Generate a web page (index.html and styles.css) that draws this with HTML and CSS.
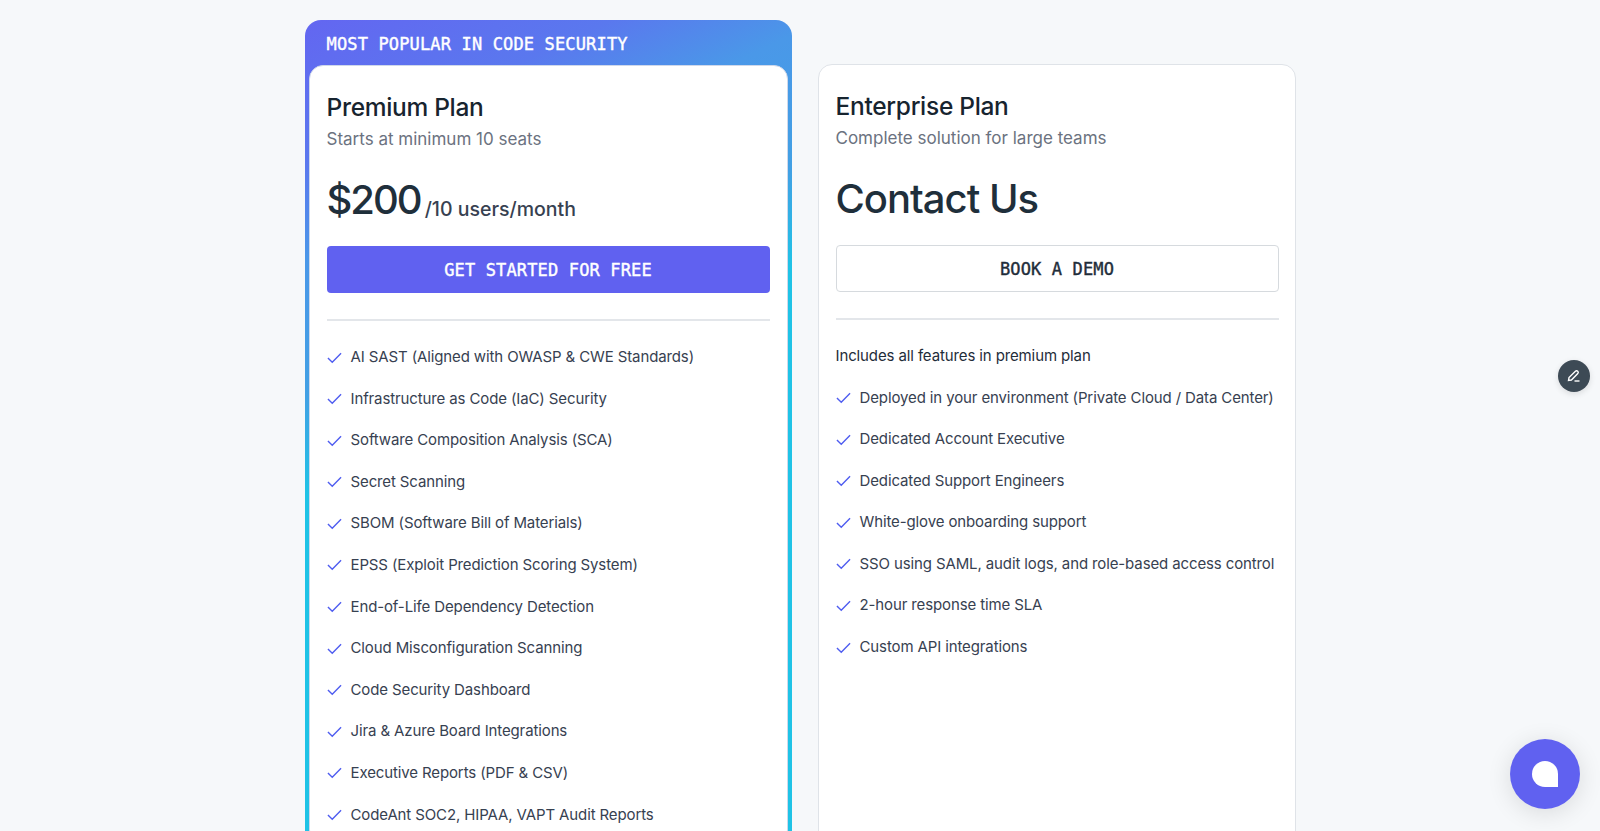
FILE: index.html
```html
<!DOCTYPE html>
<html lang="en">
<head>
  <meta charset="UTF-8">
  <meta name="viewport" content="width=device-width, initial-scale=1.0">
  <title>Pricing</title>
  <link rel="stylesheet" href="styles.css">
</head>
<body>

<div class="pricing">
  <!-- Premium -->
  <div class="popular">
    <div class="popular-label">MOST POPULAR IN CODE SECURITY</div>
    <div class="plan plan-inner">
      <h2>Premium Plan</h2>
      <p class="plan-sub">Starts at minimum 10 seats</p>
      <div class="price"><span class="price-big price-num">$200</span> <span class="price-unit">/10 users/month</span></div>
      <a class="btn btn-primary">GET STARTED FOR FREE</a>
      <hr>
      <ul class="features">
        <li><svg viewBox="0 0 16 16"><path d="M1 8.5 5.6 13 15 3.5"/></svg>AI SAST (Aligned with OWASP &amp; CWE Standards)</li>
        <li><svg viewBox="0 0 16 16"><path d="M1 8.5 5.6 13 15 3.5"/></svg>Infrastructure as Code (IaC) Security</li>
        <li><svg viewBox="0 0 16 16"><path d="M1 8.5 5.6 13 15 3.5"/></svg>Software Composition Analysis (SCA)</li>
        <li><svg viewBox="0 0 16 16"><path d="M1 8.5 5.6 13 15 3.5"/></svg>Secret Scanning</li>
        <li><svg viewBox="0 0 16 16"><path d="M1 8.5 5.6 13 15 3.5"/></svg>SBOM (Software Bill of Materials)</li>
        <li><svg viewBox="0 0 16 16"><path d="M1 8.5 5.6 13 15 3.5"/></svg>EPSS (Exploit Prediction Scoring System)</li>
        <li><svg viewBox="0 0 16 16"><path d="M1 8.5 5.6 13 15 3.5"/></svg>End-of-Life Dependency Detection</li>
        <li><svg viewBox="0 0 16 16"><path d="M1 8.5 5.6 13 15 3.5"/></svg>Cloud Misconfiguration Scanning</li>
        <li><svg viewBox="0 0 16 16"><path d="M1 8.5 5.6 13 15 3.5"/></svg>Code Security Dashboard</li>
        <li><svg viewBox="0 0 16 16"><path d="M1 8.5 5.6 13 15 3.5"/></svg>Jira &amp; Azure Board Integrations</li>
        <li><svg viewBox="0 0 16 16"><path d="M1 8.5 5.6 13 15 3.5"/></svg>Executive Reports (PDF &amp; CSV)</li>
        <li><svg viewBox="0 0 16 16"><path d="M1 8.5 5.6 13 15 3.5"/></svg>CodeAnt SOC2, HIPAA, VAPT Audit Reports</li>
      </ul>
    </div>
  </div>

  <!-- Enterprise -->
  <div class="plan plan-side">
    <h2>Enterprise Plan</h2>
    <p class="plan-sub">Complete solution for large teams</p>
    <div class="price"><span class="price-big">Contact Us</span></div>
    <a class="btn btn-outline">BOOK A DEMO</a>
    <hr>
    <p class="includes">Includes all features in premium plan</p>
    <ul class="features">
      <li><svg viewBox="0 0 16 16"><path d="M1 8.5 5.6 13 15 3.5"/></svg>Deployed in your environment (Private Cloud / Data Center)</li>
      <li><svg viewBox="0 0 16 16"><path d="M1 8.5 5.6 13 15 3.5"/></svg>Dedicated Account Executive</li>
      <li><svg viewBox="0 0 16 16"><path d="M1 8.5 5.6 13 15 3.5"/></svg>Dedicated Support Engineers</li>
      <li><svg viewBox="0 0 16 16"><path d="M1 8.5 5.6 13 15 3.5"/></svg>White-glove onboarding support</li>
      <li><svg viewBox="0 0 16 16"><path d="M1 8.5 5.6 13 15 3.5"/></svg>SSO using SAML, audit logs, and role-based access control</li>
      <li><svg viewBox="0 0 16 16"><path d="M1 8.5 5.6 13 15 3.5"/></svg>2-hour response time SLA</li>
      <li><svg viewBox="0 0 16 16"><path d="M1 8.5 5.6 13 15 3.5"/></svg>Custom API integrations</li>
    </ul>
  </div>
</div>

<button class="edit-fab" aria-label="Edit">
  <svg viewBox="0 0 16 16"><path d="M2.5 12.5 3 9.6 9.4 3.2a1.7 1.7 0 0 1 2.4 2.4L5.4 12z"/><path d="M8.5 13h5"/></svg>
</button>
<button class="chat-fab" aria-label="Chat"><span class="chat-bubble"></span></button>

</body>
</html>
```

FILE: styles.css
```css
body {
  font-family: "Inter", "Noto Sans", sans-serif;
  background: #f6f8fa;
  color: #1f2d3a;
  margin: 0;
  height: 100vh;
  overflow: hidden;
}

.pricing {
  display: flex;
  justify-content: center;
  align-items: flex-start;
  gap: 26px;
  padding-top: 20px;
}

.popular {
  width: 487px;
  box-sizing: border-box;
  padding: 0 4px 4px;
  border-radius: 16px;
  background: linear-gradient(155deg, #6366f1 0, #5a78ee 130px, #4a98e8 220px, #42a0e4 340px, #1fc3e6 430px, #1fc3e6 100%);
}

.popular-label {
  height: 45px;
  line-height: 49px;
  padding-left: 18px;
  font-family: "DejaVu Sans Mono", monospace;
  font-size: 17px;
  letter-spacing: 0.15px;
  color: #fff;
  -webkit-text-stroke: 0.4px #fff;
}

.plan {
  box-sizing: border-box;
  width: 478px;
  background: #fff;
  border: 1px solid #dfe3e8;
  border-radius: 14px;
  padding: 16px;
}

.plan-inner {
  width: 479px;
  padding-left: 17px;
  padding-right: 17px;
  border-color: #cfd8ea;
}

.plan-side {
  margin-top: 44px;
  padding-left: 17px;
  height: 900px;
}

h2 {
  margin: 9px 0 0;
  font-size: 24.5px;
  line-height: 32px;
  font-weight: 500;
  letter-spacing: -0.3px;
  color: #17242f;
}

.plan-sub {
  margin: 2px 0 0;
  font-size: 17px;
  line-height: 28px;
  color: #6b7280;
}

.price {
  margin-top: 17px;
  height: 60px;
  display: flex;
  align-items: baseline;
  gap: 4px;
  line-height: 60px;
}

.price-big {
  font-size: 40px;
  font-weight: 500;
  letter-spacing: -1px;
  color: #1f2f3b;
}

.price-num {
  letter-spacing: -2px;
}

.price-unit {
  align-self: flex-end;
  line-height: 42px;
  font-size: 19.5px;
  font-weight: 500;
  color: #374151;
}

.btn {
  display: block;
  box-sizing: border-box;
  height: 47px;
  margin-top: 16px;
  line-height: 49px;
  text-align: center;
  border-radius: 4px;
  font-family: "DejaVu Sans Mono", monospace;
  font-size: 17px;
  letter-spacing: 0.15px;
}

.btn-primary {
  background: #6061f0;
  color: #fff;
  -webkit-text-stroke: 0.4px #fff;
}

.btn-outline {
  background: #fff;
  color: #1f2d3a;
  border: 1px solid #d6dade;
  line-height: 47px;
  -webkit-text-stroke: 0.4px #1f2d3a;
}

hr {
  border: none;
  border-top: 2px solid #e3e6ea;
  margin: 26px 0 0;
}

.includes {
  margin: 26px 0 0;
  font-size: 15px;
  line-height: 20px;
  letter-spacing: -0.12px;
  color: #1f2d3a;
}

.features {
  list-style: none;
  margin: 0;
  padding: 19.5px 0 0;
  display: flex;
  flex-direction: column;
  gap: 17.6px;
}

.plan-inner .features {
  padding-top: 24px;
}

.features li {
  display: flex;
  align-items: center;
  gap: 9px;
  font-size: 15px;
  line-height: 24px;
  letter-spacing: -0.12px;
  color: #374151;
  white-space: nowrap;
}

.features svg {
  width: 15px;
  height: 15px;
  flex: none;
  fill: none;
  stroke: #4f5df0;
  stroke-width: 1.5;
}

.edit-fab {
  position: fixed;
  left: 1558px;
  top: 360px;
  width: 32px;
  height: 32px;
  padding: 8px;
  border: none;
  border-radius: 50%;
  background: #3d4a55;
  box-shadow: 0 2px 6px rgba(0, 0, 0, 0.12);
}

.edit-fab svg {
  display: block;
  width: 16px;
  height: 16px;
  fill: none;
  stroke: #fff;
  stroke-width: 1.4;
}

.chat-fab {
  position: fixed;
  left: 1510px;
  top: 739px;
  width: 70px;
  height: 70px;
  padding: 0;
  border: none;
  border-radius: 50%;
  background: #6061f0;
  box-shadow: 0 4px 24px rgba(0, 0, 0, 0.12);
  display: flex;
  align-items: center;
  justify-content: center;
}

.chat-bubble {
  width: 26px;
  height: 26px;
  background: #fff;
  border-radius: 13px 13px 0 13px;
}
```
